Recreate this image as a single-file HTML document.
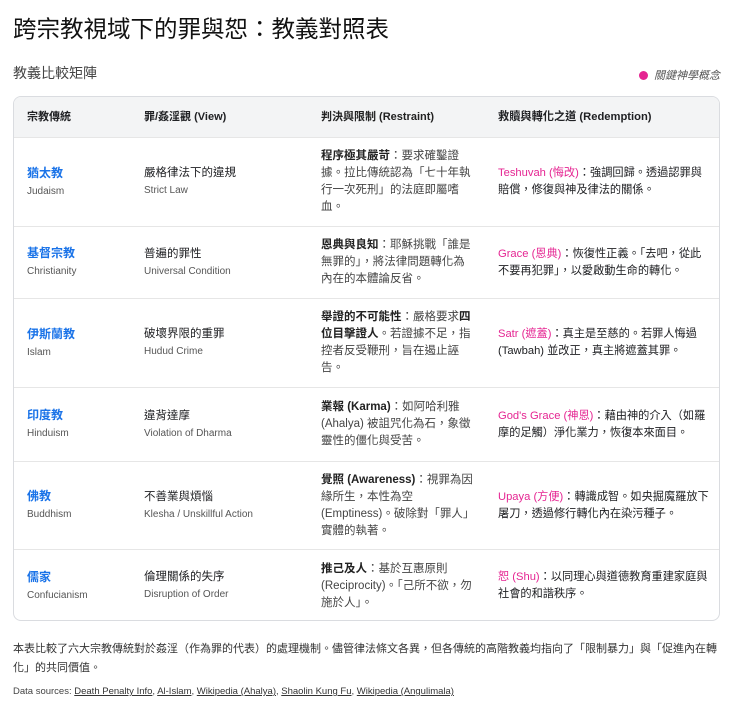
<!DOCTYPE html>
<html><head><meta charset="utf-8"><style>
*{margin:0;padding:0;box-sizing:border-box}
body{width:740px;height:707px;background:#fff;font-family:"Liberation Sans","Noto Sans CJK TC",sans-serif;color:#202124;position:relative;overflow:hidden}
h1{position:absolute;left:13px;top:10px;font-size:23.5px;font-weight:400;color:#111}
.sub{position:absolute;left:13px;top:63px;font-size:14px;color:#444}
.leg{position:absolute;right:20px;top:67px;font-size:11px;color:#555;font-style:italic}
.leg i{display:inline-block;width:9px;height:9px;border-radius:50%;background:#e52592;margin-right:6px;vertical-align:-1px}
.tbl{position:absolute;left:13px;top:96px;width:707px;height:525px;border:1px solid #dadce0;border-radius:8px;overflow:hidden}
.row{position:absolute;left:0;width:100%;border-bottom:1px solid #e6e6e6;display:flex;align-items:center}
.row>div{position:absolute;font-size:11.5px;line-height:17px}
.hd{background:#f3f4f5;font-weight:700}
.hd>div{font-size:11px}
.c1{left:13px}.c2{left:130px}.c3{left:307px;width:152px;color:#444}.row>.c4{left:484px;width:220px;white-space:nowrap;font-size:11.2px}
.n{color:#1a73e8;font-weight:700;font-size:12px}
.e{color:#555;font-size:10px;line-height:17px}
.v{font-size:11.5px}
.p{color:#e52592}
b{font-weight:700;color:#222}
.foot{position:absolute;left:13px;top:640px;width:715px;font-size:11px;line-height:19px;color:#333}
.src{position:absolute;left:13px;top:686px;font-size:9.5px;color:#444}
.src u{color:#333}
</style></head><body>
<h1>跨宗教視域下的罪與恕：教義對照表</h1>
<div class="sub">教義比較矩陣</div>
<div class="leg"><i></i>關鍵神學概念</div>
<div class="tbl">
<div class="row hd" style="top:0;height:41px"><div class="c1">宗教傳統</div><div class="c2">罪/姦淫觀 (View)</div><div class="c3" style="color:#222;width:170px">判決與限制 (Restraint)</div><div class="c4">救贖與轉化之道 (Redemption)</div></div>
<div class="row" style="top:41px;height:89px"><div class="c1"><span class="n">猶太教</span><br><span class="e">Judaism</span></div><div class="c2"><span class="v">嚴格律法下的違規</span><br><span class="e">Strict Law</span></div><div class="c3"><b>程序極其嚴苛</b>：要求確鑿證據。拉比傳統認為「七十年執行一次死刑」的法庭即屬嗜血。</div><div class="c4"><span class="p">Teshuvah (悔改)</span>：強調回歸。透過認罪與<br>賠償，修復與神及律法的關係。</div></div>
<div class="row" style="top:130px;height:72px"><div class="c1"><span class="n">基督宗教</span><br><span class="e">Christianity</span></div><div class="c2"><span class="v">普遍的罪性</span><br><span class="e">Universal Condition</span></div><div class="c3"><b>恩典與良知</b>：耶穌挑戰「誰是無罪的」，將法律問題轉化為內在的本體論反省。</div><div class="c4"><span class="p">Grace (恩典)</span>：恢復性正義。「去吧，從此<br>不要再犯罪」，以愛啟動生命的轉化。</div></div>
<div class="row" style="top:202px;height:89px"><div class="c1"><span class="n">伊斯蘭教</span><br><span class="e">Islam</span></div><div class="c2"><span class="v">破壞界限的重罪</span><br><span class="e">Hudud Crime</span></div><div class="c3"><b>舉證的不可能性</b>：嚴格要求<b>四位目擊證人</b>。若證據不足，指控者反受鞭刑，旨在遏止誣告。</div><div class="c4"><span class="p">Satr (遮蓋)</span>：真主是至慈的。若罪人悔過<br>(Tawbah) 並改正，真主將遮蓋其罪。</div></div>
<div class="row" style="top:291px;height:74px"><div class="c1"><span class="n">印度教</span><br><span class="e">Hinduism</span></div><div class="c2"><span class="v">違背達摩</span><br><span class="e">Violation of Dharma</span></div><div class="c3"><b>業報 (Karma)</b>：如阿哈利雅(Ahalya) 被詛咒化為石，象徵靈性的僵化與受苦。</div><div class="c4"><span class="p">God's Grace (神恩)</span>：藉由神的介入（如羅<br>摩的足觸）淨化業力，恢復本來面目。</div></div>
<div class="row" style="top:365px;height:88px"><div class="c1"><span class="n">佛教</span><br><span class="e">Buddhism</span></div><div class="c2"><span class="v">不善業與煩惱</span><br><span class="e">Klesha / Unskillful Action</span></div><div class="c3"><b>覺照 (Awareness)</b>：視罪為因緣所生，本性為空(Emptiness)。破除對「罪人」實體的執著。</div><div class="c4"><span class="p">Upaya (方便)</span>：轉識成智。如央掘魔羅放下<br>屠刀，透過修行轉化內在染污種子。</div></div>
<div class="row" style="top:453px;height:72px;border-bottom:none"><div class="c1"><span class="n">儒家</span><br><span class="e">Confucianism</span></div><div class="c2"><span class="v">倫理關係的失序</span><br><span class="e">Disruption of Order</span></div><div class="c3"><b>推己及人</b>：基於互惠原則(Reciprocity)。「己所不欲，勿施於人」。</div><div class="c4"><span class="p">恕 (Shu)</span>：以同理心與道德教育重建家庭與<br>社會的和諧秩序。</div></div>
</div>
<div class="foot">本表比較了六大宗教傳統對於姦淫（作為罪的代表）的處理機制。儘管律法條文各異，但各傳統的高階教義均指向了「限制暴力」與「促進內在轉化」的共同價值。</div>
<div class="src">Data sources: <u>Death Penalty Info</u>, <u>Al-Islam</u>, <u>Wikipedia (Ahalya)</u>, <u>Shaolin Kung Fu</u>, <u>Wikipedia (Angulimala)</u></div>
</body></html>
